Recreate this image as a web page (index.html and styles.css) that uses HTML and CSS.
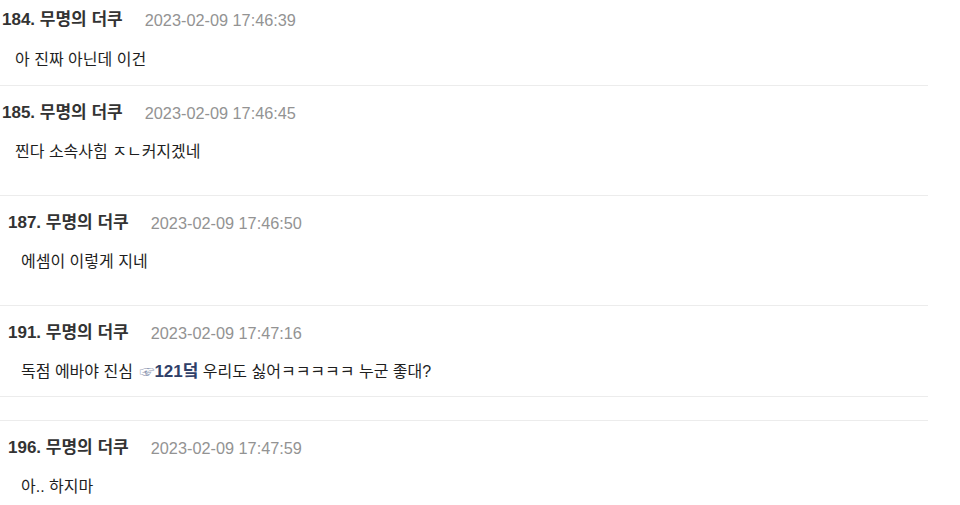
FILE: index.html
```html
<!DOCTYPE html>
<html>
<head>
    <meta charset="utf-8">
    <link rel="stylesheet" href="styles.css">
</head>
<body>
    <div class="comments">
        <div class="comment first">
            <div class="comment-head">
                <span class="comment-name">184. 무명의 더쿠</span>
                <span class="comment-date">2023-02-09 17:46:39</span>
            </div>
            <div class="comment-body">아 진짜 아닌데 이건</div>
        </div>

        <div class="comment tall">
            <div class="comment-head">
                <span class="comment-name">185. 무명의 더쿠</span>
                <span class="comment-date">2023-02-09 17:46:45</span>
            </div>
            <div class="comment-body">찐다 소속사힘 ㅈㄴ커지겠네</div>
        </div>

        <div class="comment tall reply">
            <div class="comment-head">
                <span class="comment-name">187. 무명의 더쿠</span>
                <span class="comment-date">2023-02-09 17:46:50</span>
            </div>
            <div class="comment-body">에셈이 이렇게 지네</div>
        </div>

        <div class="comment reply">
            <div class="comment-head">
                <span class="comment-name">191. 무명의 더쿠</span>
                <span class="comment-date">2023-02-09 17:47:16</span>
            </div>
            <div class="comment-body">독점 에바야 진심 <a class="ref" href="#"><span class="ref-hand">☞</span>121덬</a> 우리도 싫어ㅋㅋㅋㅋㅋ 누군 좋대?</div>
        </div>

        <div class="comment-gap"></div>

        <div class="comment reply">
            <div class="comment-head">
                <span class="comment-name">196. 무명의 더쿠</span>
                <span class="comment-date">2023-02-09 17:47:59</span>
            </div>
            <div class="comment-body">아.. 하지마</div>
        </div>
    </div>
</body>
</html>
```

FILE: styles.css
```css
body {
    margin: 0;
    background: #fff;
    font-family: "Liberation Sans", "Noto Sans CJK KR", sans-serif;
    color: #222;
}

.comments {
    width: 928px;
}

.comment {
    padding: 17px 0 14px 2px;
    border-bottom: 1px solid #ececec;
}

.comment.first {
    padding-top: 10px;
    padding-bottom: 15px;
}

.comment.first .comment-body {
    margin-top: 20px;
}

.comment.tall {
    padding-bottom: 33px;
}

.comment.reply {
    padding-left: 8px;
}

.comment-head {
    display: flex;
    align-items: center;
    gap: 22px;
    height: 20px;
    line-height: 20px;
}

.comment-name {
    font-size: 17px;
    font-weight: bold;
    color: #333;
}

.comment-date {
    font-size: 16.3px;
    color: #939393;
}

.comment-body {
    margin-top: 19px;
    padding-left: 13px;
    font-size: 16px;
    line-height: 20px;
    color: #1e1e1e;
}

.ref {
    margin-left: 2px;
    font-size: 17px;
    color: #2f4068;
    font-weight: bold;
    text-decoration: none;
}

.ref-hand {
    font-weight: normal;
    font-size: 15px;
    color: #8a95b0;
}

.comment-gap {
    height: 23px;
    border-bottom: 1px solid #ececec;
}
```
